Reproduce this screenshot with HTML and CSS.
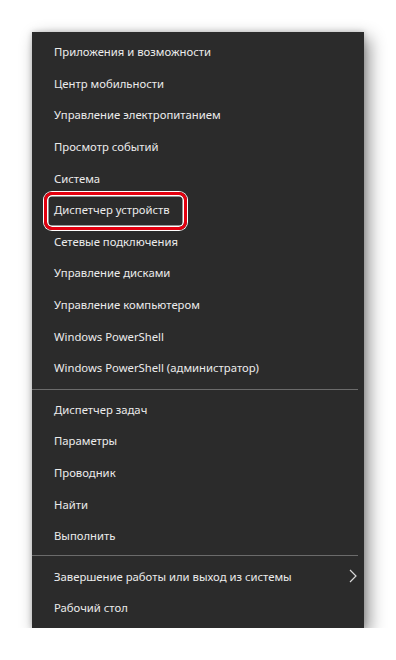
FILE: index.html
```html
<!DOCTYPE html>
<html lang="ru">
<head>
<meta charset="utf-8">
<link rel="stylesheet" href="styles.css">
</head>
<body>
<div class="menu">
  <div class="group">
    <div class="item">Приложения и возможности</div>
    <div class="item">Центр мобильности</div>
    <div class="item">Управление электропитанием</div>
    <div class="item">Просмотр событий</div>
    <div class="item">Система</div>
    <div class="item item-marked">Диспетчер устройств<span class="mark"></span></div>
    <div class="item">Сетевые подключения</div>
    <div class="item">Управление дисками</div>
    <div class="item">Управление компьютером</div>
    <div class="item">Windows PowerShell</div>
    <div class="item">Windows PowerShell (администратор)</div>
  </div>
  <div class="sep"></div>
  <div class="group">
    <div class="item">Диспетчер задач</div>
    <div class="item">Параметры</div>
    <div class="item">Проводник</div>
    <div class="item">Найти</div>
    <div class="item">Выполнить</div>
  </div>
  <div class="sep sep2"></div>
  <div class="group">
    <div class="item item-sub">Завершение работы или выход из системы
      <svg class="chev" width="8" height="14" viewBox="0 0 8 14"><polyline points="1,1 7,7 1,13" fill="none" stroke="#d8d8d8" stroke-width="1.2"/></svg>
    </div>
    <div class="item">Рабочий стол</div>
  </div>
</div>
</body>
</html>
```
FILE: styles.css
```css
html, body {
  margin: 0;
  padding: 0;
  background: #ffffff;
}
body {
  padding: 32px 0 0 32px;
  font-family: "Noto Sans", "Open Sans", sans-serif;
}
.menu {
  width: 332px;
  height: 596px;
  box-sizing: border-box;
  padding-top: 4px;
  background: #2b2b2b;
  box-shadow: 5px 6px 16px rgba(0, 0, 0, 0.45), 0 0 6px rgba(0, 0, 0, 0.2);
}
.group {
  display: flex;
  flex-direction: column;
}
.item {
  height: 31.6px;
  display: flex;
  align-items: center;
  padding-left: 22px;
  padding-right: 7px;
  font-size: 11.3px;
  color: #ececec;
  white-space: nowrap;
  position: relative;
}
.item-sub {
  justify-content: space-between;
}
.sep {
  height: 1px;
  background: #6b6b6b;
  margin: 5px 6px 4px 0;
}
.sep2 {
  margin-top: 3.8px;
}
.mark {
  position: absolute;
  left: 12px;
  top: -2px;
  width: 143px;
  height: 38px;
  box-sizing: border-box;
  border: 3px solid #e3000f;
  border-radius: 8px;
  box-shadow: 0 0 0 1px #ffffff, inset 0 0 0 1.5px #ffffff;
}
```
